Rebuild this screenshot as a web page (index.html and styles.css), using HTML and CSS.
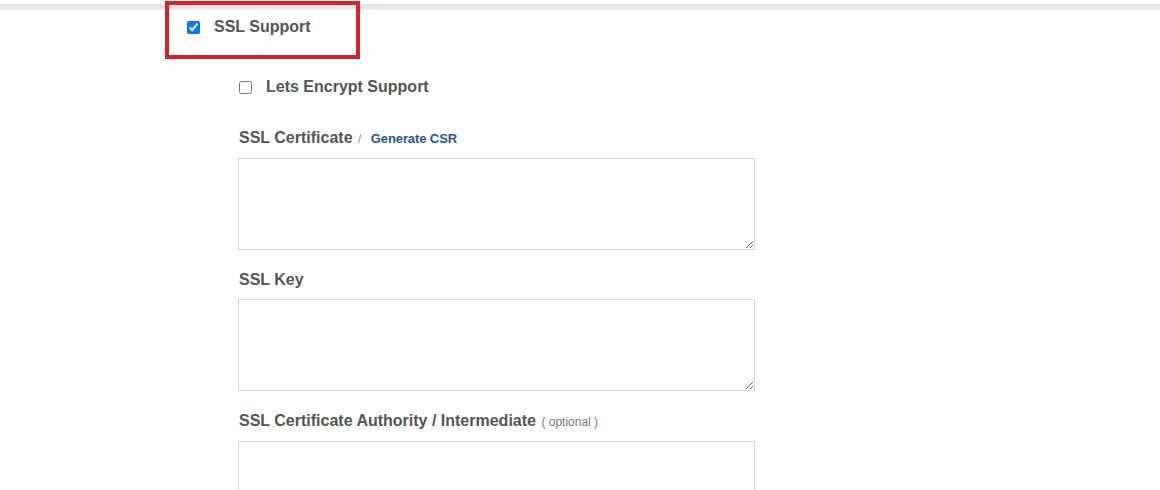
FILE: index.html
```html
<!DOCTYPE html>
<html>
<head>
<meta charset="utf-8">
<link rel="stylesheet" href="styles.css">
</head>
<body>
<div class="topbar"></div>
<div class="page">
  <label class="ssl-box">
    <input type="checkbox" class="chk" checked>
    <span class="ssl-text">SSL Support</span>
  </label>
  <div class="ssl-fields">
    <label class="check-row">
      <input type="checkbox" class="chk">
      <span class="check-text">Lets Encrypt Support</span>
    </label>
    <div class="field">
      <div class="field-label">SSL Certificate <span class="sep">/</span> <a class="csr-link">Generate CSR</a></div>
      <textarea class="field-input"></textarea>
    </div>
    <div class="field">
      <div class="field-label">SSL Key</div>
      <textarea class="field-input"></textarea>
    </div>
    <div class="field">
      <div class="field-label">SSL Certificate Authority / Intermediate <span class="optional">( optional )</span></div>
      <textarea class="field-input"></textarea>
    </div>
  </div>
</div>
</body>
</html>
```
FILE: styles.css
```css
html, body {
  margin: 0;
  padding: 0;
  background: #fff;
  font-family: "Liberation Sans", Arial, sans-serif;
  color: #555;
}
body {
  position: relative;
  height: 490px;
  overflow: hidden;
}
.topbar {
  position: absolute;
  left: 0;
  right: 0;
  top: 4px;
  height: 6px;
  background: linear-gradient(#e2e2e2, #e6e6e6 60%, #f1f1f1);
}
.page {
  position: relative;
  padding-top: 1px;
}
.ssl-box {
  display: flex;
  align-items: center;
  box-sizing: border-box;
  width: 195px;
  height: 58px;
  margin-left: 165px;
  border: 4px solid #d6222c;
  padding: 0 0 6px 18px;
  gap: 14px;
}
.chk {
  width: 13px;
  height: 13px;
  margin: 0;
  flex: none;
}
.ssl-text, .check-text {
  font-size: 16px;
  font-weight: bold;
  color: #555;
  line-height: 20px;
}
.ssl-fields {
  margin-left: 238px;
  width: 517px;
}
.check-row {
  display: flex;
  align-items: center;
  gap: 14px;
  margin-top: 18px;
  margin-left: 1px;
  height: 20px;
}
.field {
  display: flex;
  flex-direction: column;
}
.check-row + .field {
  margin-top: 31px;
}
.field + .field {
  margin-top: 20px;
}
.field-label {
  margin-left: 1px;
  font-size: 16px;
  font-weight: bold;
  line-height: 20px;
  margin-bottom: 9px;
  color: #555;
}
.sep {
  font-size: 12px;
  font-weight: normal;
  color: #888;
  margin-left: 1px;
}
.csr-link {
  font-size: 13px;
  font-weight: bold;
  color: #2a5491;
  margin-left: 5px;
  letter-spacing: -0.1px;
}
.optional {
  font-size: 12px;
  font-weight: normal;
  color: #777;
  margin-left: 1px;
}
.field-input {
  box-sizing: border-box;
  width: 517px;
  height: 92px;
  margin: 0;
  border: 1px solid #d6d6d6;
  border-radius: 0;
  background: #fff;
  resize: vertical;
  font-family: "Liberation Sans", Arial, sans-serif;
}
```
